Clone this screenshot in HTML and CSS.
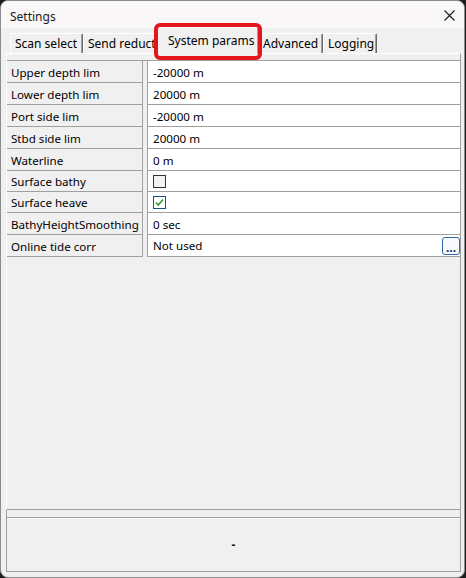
FILE: index.html
```html
<!DOCTYPE html>
<html>
<head>
<meta charset="utf-8">
<link rel="stylesheet" href="styles.css">
</head>
<body>
<div class="window">
  <div class="titlebar">
    <span class="title">Settings</span>
    <svg class="close" width="11" height="11" viewBox="0 0 11 11"><path d="M0.5 0.5 L10.5 10.5 M10.5 0.5 L0.5 10.5" stroke="#1a1a1a" stroke-width="1.1" fill="none"/></svg>
  </div>
  <div class="content">
    <div class="tabs">
      <div class="tab t1">Scan select</div>
      <div class="tab t2">Send reduct</div>
      <div class="tab sel">System params<span class="highlight"></span></div>
      <div class="tab t4">Advanced</div>
      <div class="tab t5">Logging</div>
    </div>
    <div class="panel">
      <div class="grid">
        <div class="row"><div class="label">Upper depth lim</div><div class="value">-20000 m</div></div>
        <div class="row"><div class="label">Lower depth lim</div><div class="value">20000 m</div></div>
        <div class="row"><div class="label">Port side lim</div><div class="value">-20000 m</div></div>
        <div class="row"><div class="label">Stbd side lim</div><div class="value">20000 m</div></div>
        <div class="row"><div class="label">Waterline</div><div class="value">0 m</div></div>
        <div class="row short"><div class="label">Surface bathy</div><div class="value"><span class="check"></span></div></div>
        <div class="row short"><div class="label">Surface heave</div><div class="value"><span class="check checked"><svg width="11" height="11" viewBox="0 0 11 11"><path d="M2 5.5 L4.3 8 L9 2.5" stroke="#2e9e2e" stroke-width="1.6" fill="none"/></svg></span></div></div>
        <div class="row"><div class="label">BathyHeightSmoothing</div><div class="value">0 sec</div></div>
        <div class="row"><div class="label">Online tide corr</div><div class="value value-btn"><span>Not used</span><span class="dots">...</span></div></div>
      </div>
    </div>
    <div class="lower">
      <div class="status">-</div>
    </div>
  </div>
</div>
</body>
</html>
```
FILE: styles.css
```css
body {
  margin: 0;
  background: #1e1e1e;
  font-family: "Noto Sans", "Liberation Sans", sans-serif;
  font-size: 12px;
  color: #000;
}
.window {
  width: 465px;
  height: 578px;
  box-sizing: border-box;
  border: 1px solid #8c8c8c;
  border-radius: 8px;
  background: #f0f0f0;
  overflow: hidden;
  display: flex;
  flex-direction: column;
}
.titlebar {
  height: 27px;
  flex: none;
  background: #f9f7f7;
  display: flex;
  align-items: center;
  justify-content: space-between;
  padding: 0 9px 0 9px;
}
.title {
  padding-top: 3px;
  color: #1a1a1a;
}
.close {
  display: block;
  margin-top: 1px;
}
.content {
  flex: 1;
  display: flex;
  flex-direction: column;
  padding: 0 3px 5px 5px;
}
.tabs {
  height: 25px;
  flex: none;
  display: flex;
  align-items: flex-end;
  padding-left: 4px;
  position: relative;
  z-index: 2;
}
.tab {
  height: 20px;
  box-sizing: border-box;
  border-left: 1px solid #fff;
  border-top: 1px solid #fff;
  border-right: 1px solid #696969;
  box-shadow: inset -1px 0 #a0a0a0;
  border-radius: 2px 2px 0 0;
  padding: 0 0 0 4px;
  display: flex;
  align-items: center;
  white-space: nowrap;
  overflow: hidden;
  background: #f0f0f0;
}
.t1 { width: 73px; }
.t2 { width: 76px; margin-left: 0; }
.sel {
  width: 102px;
  height: 27px;
  margin-left: -2px;
  margin-bottom: -1px;
  padding-left: 10px;
  padding-bottom: 2px;
  position: relative;
  overflow: visible;
  z-index: 3;
}
.t4 { width: 64px; padding-left: 3px; }
.t5 { width: 54px; margin-left: 0; }
.highlight {
  position: absolute;
  left: -4px;
  right: -4px;
  top: -5px;
  bottom: -6px;
  border: 4px solid #e3161e;
  border-radius: 6px;
  pointer-events: none;
}
.panel {
  flex: 1;
  border-top: 1px solid #fff;
  border-left: 1px solid #fff;
  border-right: 1px solid #a0a0a0;
  border-bottom: 1px solid #a0a0a0;
  padding-top: 6px;
  position: relative;
  z-index: 1;
}
.grid {
  border-top: 1px solid #a0a0a0;
}
.row {
  display: flex;
  height: 22px;
  font-size: 11.6px;
}
.row.short {
  height: 21px;
}
.label {
  width: 136px;
  box-sizing: border-box;
  border-right: 1px solid #a0a0a0;
  border-bottom: 1px solid #a0a0a0;
  padding: 1px 0 0 4px;
  display: flex;
  align-items: center;
  white-space: nowrap;
  overflow: hidden;
  background: #f0f0f0;
}
.value {
  flex: 1;
  margin-left: 4px;
  box-sizing: border-box;
  border-left: 1px solid #a0a0a0;
  border-bottom: 1px solid #a0a0a0;
  background: #fff;
  padding: 1px 0 0 5px;
  display: flex;
  align-items: center;
}
.value-btn {
  justify-content: space-between;
  padding-top: 0;
}
.check {
  width: 13px;
  height: 13px;
  box-sizing: border-box;
  border: 1px solid #333;
  background: #f3f3f3;
  display: flex;
  align-items: center;
  justify-content: center;
}
.check.checked {
  border-color: #1f4f7f;
  background: #fff;
}
.dots {
  width: 18px;
  height: 18px;
  box-sizing: border-box;
  border: 1px solid #2f6aa8;
  border-radius: 3px;
  background: #f7f9fc;
  color: #1b2f4f;
  font-weight: bold;
  font-size: 12px;
  line-height: 20px;
  text-align: center;
  overflow: hidden;
}
.lower {
  height: 62px;
  flex: none;
  box-sizing: border-box;
  border-left: 1px solid #a0a0a0;
  border-right: 1px solid #a0a0a0;
  border-bottom: 1px solid #a0a0a0;
  padding-top: 7px;
  display: flex;
  flex-direction: column;
}
.status {
  flex: 1;
  border-top: 1px solid #a0a0a0;
  box-shadow: inset 0 1px #fff;
  display: flex;
  align-items: center;
  justify-content: center;
  font-weight: bold;
  color: #111;
}
```
